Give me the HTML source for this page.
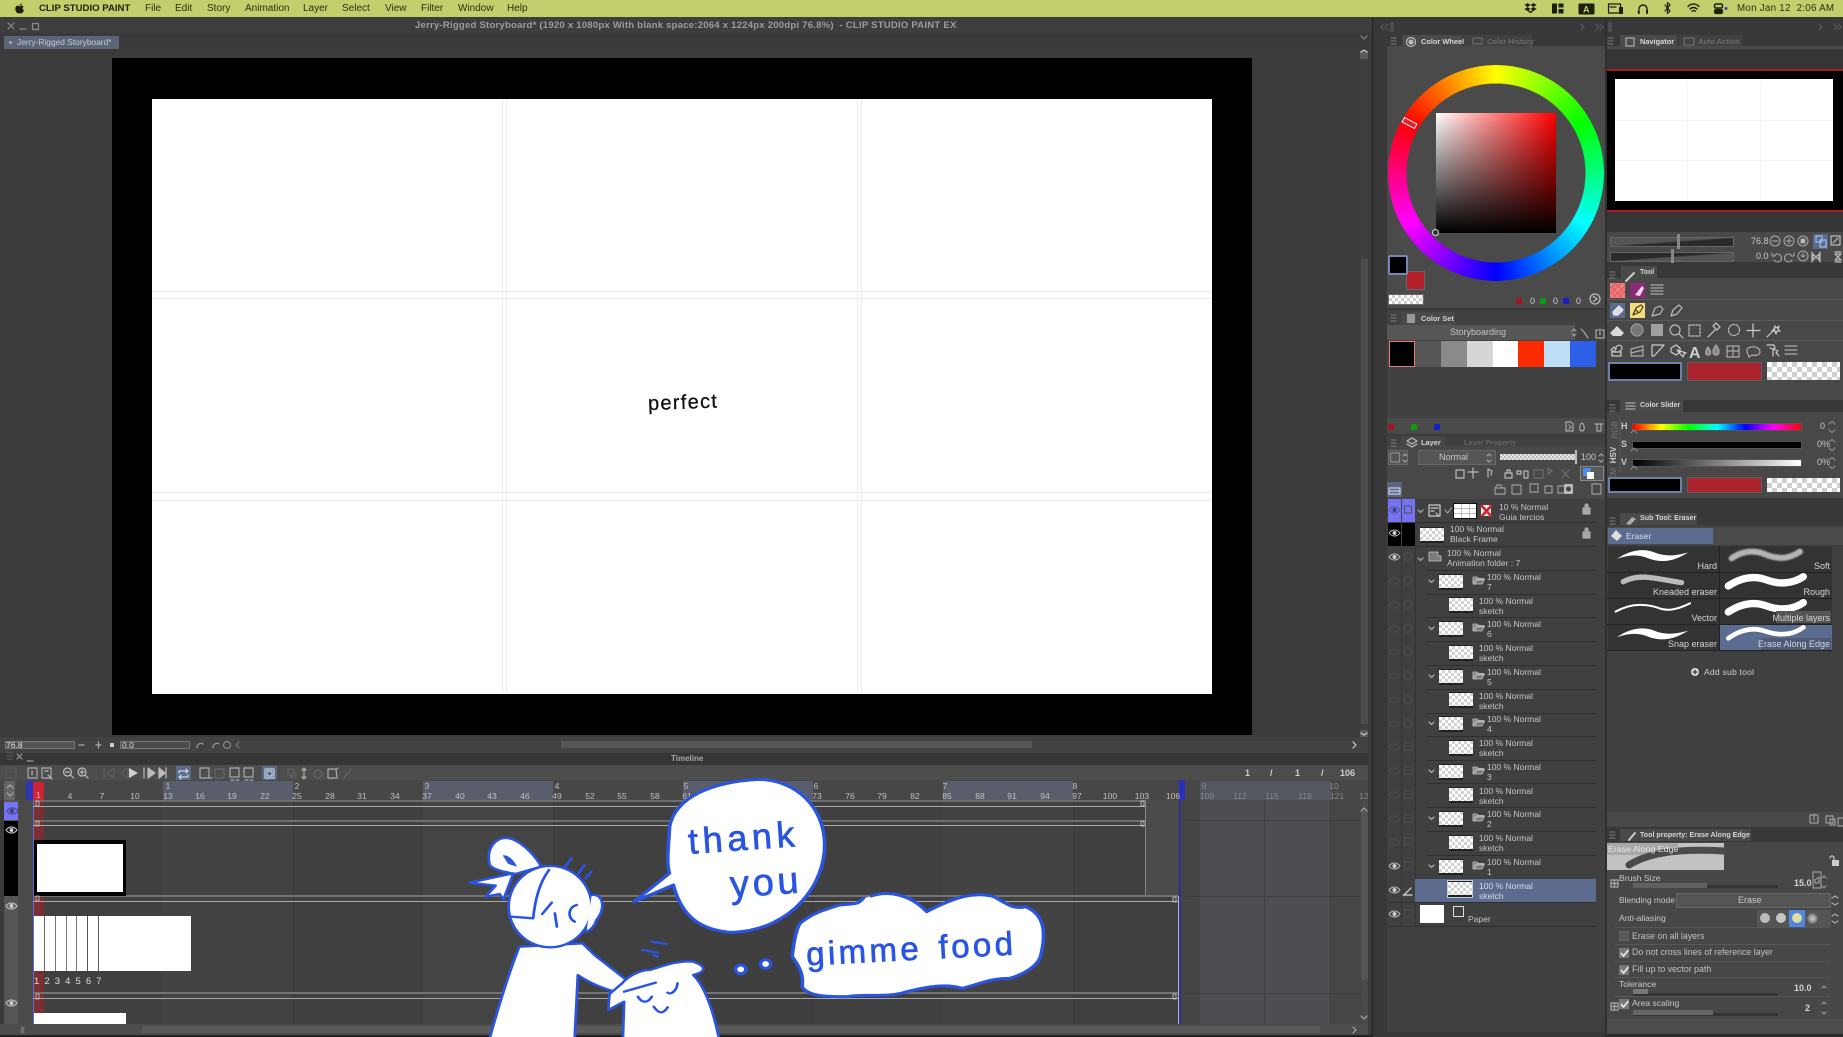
<!DOCTYPE html>
<html><head><meta charset="utf-8"><title>Clip Studio Paint</title>
<style>
html,body{margin:0;padding:0;background:#3b3b3b;width:1843px;height:1037px;overflow:hidden}
#p{position:relative;width:1843px;height:1037px;overflow:hidden;font-family:"Liberation Sans",sans-serif;color:#c8c8c8;filter:blur(.35px)}
#p div,#p span,#p svg{position:absolute}
.t{white-space:nowrap;line-height:1;font-size:9px}
.ck{background:repeating-conic-gradient(#cfcfcf 0 25%,#fff 0 50%) 0 0/8px 8px}
.m{top:3px;font-size:10px;color:#2c3010;line-height:11px;white-space:nowrap}
.tab{font-size:7.4px;line-height:1;white-space:nowrap;font-weight:bold}
.hl{background:#2f2f2f;height:1px;left:1416px;width:180px}
.a{font-size:8.5px;line-height:10px;white-space:pre;color:#c6c6c6}
.th{background:repeating-conic-gradient(#d2d2d2 0 25%,#fff 0 50%) 0 0/6px 6px;border-top:1px solid #222;border-bottom:2px solid #222;width:24px;height:13px}
.r i{position:absolute;top:0;width:20px;text-align:center;font-style:normal;font-size:8.5px;line-height:10px;color:#c0c0c0}
.d{background:#363636}
.lb{font-size:9px;line-height:1;white-space:nowrap;color:#d5d5d5;text-align:right}
</style></head><body><div id="p">

<!-- menu bar -->
<div style="left:0;top:0;width:1843px;height:17px;background:#c3ce6c"></div>
<span class="m" style="left:39px;font-weight:bold;font-size:9.6px;color:#1d2008">CLIP STUDIO PAINT</span>
<span class="m" style="left:145px">File</span><span class="m" style="left:175px">Edit</span><span class="m" style="left:207px">Story</span><span class="m" style="left:245px">Animation</span><span class="m" style="left:303px">Layer</span><span class="m" style="left:342px">Select</span><span class="m" style="left:385px">View</span><span class="m" style="left:421px">Filter</span><span class="m" style="left:458px">Window</span><span class="m" style="left:507px">Help</span>
<span class="m" style="left:1737px;font-size:9.8px;letter-spacing:.25px">Mon Jan 12&nbsp; 2:06 AM</span>

<!-- title area -->
<div style="left:0;top:17px;width:1373px;height:16px;background:#3e3e3e"></div>
<span class="t" style="left:415px;top:21px;font-size:9.6px;font-weight:bold;color:#9c9c9c;letter-spacing:.2px">Jerry-Rigged Storyboard* (1920 x 1080px With blank space:2064 x 1224px 200dpi 76.8%)&nbsp; - CLIP STUDIO PAINT EX</span>
<div style="left:0;top:33px;width:1373px;height:17px;background:#3a3a3a"></div>
<div style="left:4px;top:36px;width:115px;height:13px;background:#5c6478"></div>
<span class="t" style="left:17px;top:38px;font-size:8.4px;color:#c6cad4">Jerry-Rigged Storyboard*</span>
<div style="left:9px;top:41px;width:3px;height:3px;background:#aab;border-radius:2px"></div>

<!-- canvas -->
<div style="left:0;top:50px;width:1359px;height:687px;background:#3b3b3b"></div>
<div style="left:112px;top:58px;width:1140px;height:677px;background:#000"></div>
<div style="left:152px;top:99px;width:1060px;height:595px;background:#fff"></div>
<div style="left:152px;top:291px;width:1060px;height:1px;background:#ececec"></div>
<div style="left:152px;top:298px;width:1060px;height:1px;background:#ececec"></div>
<div style="left:152px;top:492px;width:1060px;height:1px;background:#ececec"></div>
<div style="left:152px;top:500px;width:1060px;height:1px;background:#ececec"></div>
<div style="left:502px;top:99px;width:1px;height:595px;background:#ececec"></div>
<div style="left:506px;top:99px;width:1px;height:595px;background:#ececec"></div>
<div style="left:857px;top:99px;width:1px;height:595px;background:#ececec"></div>
<div style="left:861px;top:99px;width:1px;height:595px;background:#ececec"></div>
<span class="t" style="left:648px;top:394px;font-size:20px;letter-spacing:1.3px;color:#111;-webkit-text-stroke:.3px #111;transform:rotate(-2deg);transform-origin:left">perfect</span>

<!-- canvas scrollbars -->
<div style="left:1360px;top:50px;width:8px;height:690px;background:#3f3f3f"></div>
<div style="left:1361px;top:259px;width:7px;height:465px;background:#4c4c4c"></div>
<div style="left:1360px;top:51px;width:8px;height:8px;background:#5a5a5a"></div>
<div style="left:1360px;top:730px;width:8px;height:8px;background:#5a5a5a"></div>
<div style="left:0;top:737px;width:1373px;height:16px;background:#424242"></div>
<div style="left:561px;top:741px;width:471px;height:7px;background:#565656"></div>
<div style="left:5px;top:741px;width:70px;height:8px;background:#555;border:1px solid #777;box-sizing:border-box"></div>
<div style="left:120px;top:741px;width:70px;height:8px;background:#4a4a4a;border:1px solid #777;box-sizing:border-box"></div>
<span class="t" style="left:6px;top:741px;font-size:8.5px;color:#ddd">76.8</span>
<span class="t" style="left:122px;top:741px;font-size:8.5px;color:#ddd">0.0</span>

<!-- timeline chrome -->
<div style="left:0;top:753px;width:1368px;height:12px;background:#363636"></div>
<span class="t" style="left:671px;top:755px;font-size:8px;font-weight:bold;color:#a5a5a5">Timeline</span>
<div style="left:0;top:765px;width:1368px;height:15px;background:#4d4d4d"></div>
<div style="left:176px;top:766px;width:15px;height:14px;background:#5b6a8a"></div>
<div style="left:262px;top:766px;width:15px;height:14px;background:#5b6a8a"></div>
<span class="t" style="left:1245px;top:769px;font-size:9px;font-weight:bold;color:#d0d0d0">1</span>
<span class="t" style="left:1270px;top:769px;font-size:9px;font-weight:bold;color:#d0d0d0">/</span>
<span class="t" style="left:1295px;top:769px;font-size:9px;font-weight:bold;color:#d0d0d0">1</span>
<span class="t" style="left:1321px;top:769px;font-size:9px;font-weight:bold;color:#d0d0d0">/</span>
<span class="t" style="left:1340px;top:769px;font-size:9px;font-weight:bold;color:#d0d0d0">106</span>

<!-- ruler -->
<div style="left:0;top:780px;width:1368px;height:20px;background:#474747"></div>
<div style="left:163px;top:781px;width:130px;height:19px;background:#5a5d6c"></div>
<div style="left:423px;top:781px;width:130px;height:19px;background:#5a5d6c"></div>
<div style="left:683px;top:781px;width:130px;height:19px;background:#5a5d6c"></div>
<div style="left:943px;top:781px;width:130px;height:19px;background:#5a5d6c"></div>
<div style="left:1200px;top:781px;width:131px;height:19px;background:#545660"></div>
<div style="left:26px;top:781px;width:7px;height:19px;background:#2a35b8"></div>
<div style="left:4px;top:781px;width:11px;height:19px;background:#646464"></div>

<!-- tracks -->
<div style="left:0;top:800px;width:1362px;height:224px;background:#404040"></div>
<div style="left:163px;top:800px;width:130px;height:224px;background:#434343"></div>
<div style="left:423px;top:800px;width:130px;height:224px;background:#444"></div>
<div style="left:683px;top:800px;width:130px;height:224px;background:#3f3f3f"></div>
<div style="left:943px;top:800px;width:130px;height:224px;background:#434343"></div>
<div style="left:1145px;top:800px;width:33px;height:96px;background:#4b4b4b"></div>
<div style="left:1178px;top:800px;width:22px;height:224px;background:#454545"></div>
<div style="left:1200px;top:800px;width:130px;height:224px;background:#4d4e53"></div>
<div style="left:1330px;top:800px;width:32px;height:224px;background:#464646"></div>
<div style="left:293px;top:800px;width:1px;height:224px;background:#383838"></div>
<div style="left:553px;top:800px;width:1px;height:224px;background:#393939"></div>
<div style="left:813px;top:800px;width:1px;height:224px;background:#393939"></div>
<div style="left:1073px;top:800px;width:1px;height:224px;background:#393939"></div>
<div style="left:1264px;top:800px;width:1px;height:224px;background:#3f3f3f"></div>
<div style="left:1330px;top:800px;width:1px;height:224px;background:#3f3f3f"></div>

<!-- left track columns -->
<div style="left:0;top:800px;width:4px;height:224px;background:#3b3b3b"></div>
<div style="left:4px;top:800px;width:14px;height:224px;background:#565656"></div>
<div style="left:18px;top:800px;width:15px;height:224px;background:#4a4a4a"></div>
<div style="left:4px;top:802px;width:14px;height:18px;background:#7473f2"></div>
<div style="left:4px;top:821px;width:14px;height:75px;background:#000"></div>

<!-- playhead -->
<div style="left:33px;top:800px;width:11px;height:224px;background:#7a2f33"></div>
<div style="left:33px;top:782px;width:11px;height:18px;background:#cf2336"></div>
<div style="left:33px;top:800px;width:1px;height:224px;background:#6468d8"></div>
<div style="left:1178px;top:896px;width:1px;height:128px;background:#b8b8c8"></div>
<div style="left:1145px;top:800px;width:1px;height:96px;background:#8a8a8a"></div>
<div style="left:1179px;top:780px;width:6px;height:20px;background:#2a2fc0"></div>
<div style="left:1179px;top:800px;width:2px;height:224px;background:#2d3190"></div>

<!-- row lines -->
<div style="left:33px;top:800px;width:1112px;height:2px;background:#6d6d6d"></div>
<div style="left:33px;top:806px;width:1112px;height:1px;background:#a8a8a8"></div>
<div style="left:33px;top:820px;width:1112px;height:2px;background:#6d6d6d"></div>
<div style="left:33px;top:825px;width:1112px;height:1px;background:#a8a8a8"></div>
<div style="left:33px;top:895px;width:1145px;height:2px;background:#737373"></div>
<div style="left:33px;top:901px;width:1145px;height:1px;background:#a8a8a8"></div>
<div style="left:33px;top:992px;width:1145px;height:2px;background:#737373"></div>
<div style="left:33px;top:998px;width:1145px;height:1px;background:#a8a8a8"></div>
<div style="left:1185px;top:820px;width:177px;height:1px;background:#3c3c3c"></div>
<div style="left:1185px;top:896px;width:177px;height:1px;background:#3c3c3c"></div>
<div style="left:1185px;top:993px;width:177px;height:1px;background:#3c3c3c"></div>

<!-- clips -->
<div style="left:34px;top:840px;width:92px;height:56px;background:#000"></div>
<div style="left:37px;top:844px;width:86px;height:48px;background:#fff"></div>
<div style="left:34px;top:916px;width:157px;height:55px;background:#fff"></div>
<div style="left:44px;top:916px;width:1px;height:55px;background:#666"></div>
<div style="left:55px;top:916px;width:1px;height:55px;background:#777"></div>
<div style="left:66px;top:916px;width:1px;height:55px;background:#777"></div>
<div style="left:76px;top:916px;width:1px;height:55px;background:#777"></div>
<div style="left:87px;top:916px;width:1px;height:55px;background:#555"></div>
<div style="left:98px;top:916px;width:1px;height:55px;background:#555"></div>
<div style="left:34px;top:1013px;width:92px;height:11px;background:#fff"></div>
<span class="t" style="left:34px;top:977px;font-size:9.5px;color:#ddd;letter-spacing:5.1px">1234567</span>

<!-- ruler labels -->
<div class="r" style="left:0;top:791px;width:1368px;height:10px;overflow:hidden">
<i style="left:60px">4</i><i style="left:92px">7</i><i style="left:125px">10</i><i style="left:158px">13</i><i style="left:190px">16</i><i style="left:222px">19</i><i style="left:255px">22</i><i style="left:287px">25</i><i style="left:320px">28</i><i style="left:352px">31</i><i style="left:385px">34</i><i style="left:417px">37</i><i style="left:450px">40</i><i style="left:482px">43</i><i style="left:515px">46</i><i style="left:547px">49</i><i style="left:580px">52</i><i style="left:612px">55</i><i style="left:645px">58</i><i style="left:677px">61</i><i style="left:807px">73</i><i style="left:840px">76</i><i style="left:872px">79</i><i style="left:905px">82</i><i style="left:937px">85</i><i style="left:970px">88</i><i style="left:1002px">91</i><i style="left:1035px">94</i><i style="left:1067px">97</i><i style="left:1100px">100</i><i style="left:1132px">103</i><i style="left:1163px">106</i><i style="left:1197px;color:#8c8c8c">109</i><i style="left:1230px;color:#8c8c8c">112</i><i style="left:1262px;color:#8c8c8c">115</i><i style="left:1295px;color:#8c8c8c">118</i><i style="left:1327px;color:#8c8c8c">121</i><i style="left:1354px;color:#8c8c8c">12</i>
</div>
<div class="r" style="left:0;top:781px;width:1368px;height:10px">
<i style="left:158px">1</i><i style="left:287px">2</i><i style="left:417px">3</i><i style="left:547px">4</i><i style="left:676px">5</i><i style="left:806px">6</i><i style="left:935px">7</i><i style="left:1065px">8</i><i style="left:1194px;color:#8c8c8c">9</i><i style="left:1324px;color:#8c8c8c">10</i>
</div>
<span class="t" style="left:36px;top:791px;font-size:8.5px;color:#f2b8b8">1</span>

<!-- timeline scrollbars -->
<div style="left:1362px;top:800px;width:8px;height:224px;background:#4a4a4a"></div>
<div style="left:1361px;top:810px;width:7px;height:170px;background:#555;border-radius:3px"></div>
<div style="left:0;top:1024px;width:1368px;height:11px;background:#4c4c4c"></div>
<div style="left:142px;top:1026px;width:1178px;height:7px;background:#5a5a5a"></div>
<div style="left:1368px;top:50px;width:5px;height:987px;background:#3a3a3a"></div>
<div style="left:1372px;top:17px;width:1px;height:1020px;background:#222"></div>
<div style="left:0;top:1035px;width:1373px;height:2px;background:#232323"></div>

<!-- right side -->
<div style="left:1373px;top:17px;width:470px;height:1020px;background:#383838"></div>
<div style="left:1387px;top:46px;width:218px;height:262px;background:#4a4a4a"></div>
<div style="left:1402px;top:35px;width:60px;height:11px;background:#4a4a4a"></div>
<div style="left:1464px;top:35px;width:68px;height:11px;background:#414141"></div>
<span class="tab" style="left:1421px;top:38px;color:#d8d8d8">Color Wheel</span>
<span class="tab" style="left:1487px;top:38px;color:#6b6b6b">Color History</span>
<!-- colour wheel -->
<div style="left:1388px;top:65px;width:216px;height:216px;border-radius:50%;background:conic-gradient(#ff0 0deg,#0f0 60deg,#0ff 120deg,#00f 180deg,#f0f 240deg,#f00 300deg,#ff0 360deg);-webkit-mask:radial-gradient(circle,transparent 89px,#000 90px);mask:radial-gradient(circle,transparent 89px,#000 90px)"></div>
<div style="left:1436px;top:113px;width:120px;height:120px;background:linear-gradient(to top,#000,rgba(0,0,0,0)),linear-gradient(to right,#fff,#f00)"></div>
<div style="left:1402px;top:120px;width:15px;height:6px;border:1px solid #fff;box-sizing:border-box;transform:rotate(28deg);background:#e81a2c"></div>
<div style="left:1432px;top:229px;width:7px;height:7px;border:1px solid #ddd;border-radius:50%;box-sizing:border-box;background:#333"></div>
<div style="left:1406px;top:271px;width:19px;height:19px;background:#b21f2b;border:1px solid #666;box-sizing:border-box"></div>
<div style="left:1388px;top:255px;width:20px;height:20px;background:#000;border:2px solid #7387b3;box-sizing:border-box;border-radius:2px"></div>
<div class="ck" style="left:1388px;top:294px;width:36px;height:11px;border:1px solid #666;box-sizing:border-box;background-size:6px 6px"></div>
<div style="left:1516px;top:298px;width:6px;height:6px;background:#a01520"></div>
<div style="left:1540px;top:298px;width:6px;height:6px;background:#0c9a18"></div>
<div style="left:1563px;top:298px;width:6px;height:6px;background:#1420c0"></div>
<span class="t" style="left:1530px;top:297px;font-size:9px">0</span><span class="t" style="left:1553px;top:297px;font-size:9px">0</span><span class="t" style="left:1576px;top:297px;font-size:9px">0</span>

<!-- colour set -->
<div style="left:1387px;top:310px;width:218px;height:125px;background:#414141"></div>
<div style="left:1401px;top:312px;width:54px;height:13px;background:#4a4a4a"></div>
<span class="tab" style="left:1421px;top:315px;color:#d4d4d4">Color Set</span>
<div style="left:1387px;top:325px;width:188px;height:15px;background:#565656"></div>
<span class="t" style="left:1450px;top:328px;font-size:9px;color:#c4c4c4">Storyboarding</span>
<div style="left:1389px;top:341px;width:26px;height:26px;background:#000;border:1px solid #e87a7a;box-sizing:border-box"></div>
<div style="left:1415px;top:341px;width:26px;height:26px;background:#555"></div>
<div style="left:1441px;top:341px;width:26px;height:26px;background:#8a8a8a"></div>
<div style="left:1467px;top:341px;width:26px;height:26px;background:#d6d6d6"></div>
<div style="left:1493px;top:341px;width:26px;height:26px;background:#fff"></div>
<div style="left:1518px;top:341px;width:26px;height:26px;background:#fb2d00"></div>
<div style="left:1544px;top:341px;width:26px;height:26px;background:#bfdff8"></div>
<div style="left:1570px;top:341px;width:26px;height:26px;background:#2d5fe8"></div>
<div style="left:1387px;top:418px;width:218px;height:15px;background:#4b4b4b"></div>
<div style="left:1388px;top:424px;width:6px;height:6px;background:#a01520"></div>
<div style="left:1411px;top:424px;width:6px;height:6px;background:#0c9a18"></div>
<div style="left:1434px;top:424px;width:6px;height:6px;background:#1420c0"></div>

<!-- layer palette -->
<div style="left:1387px;top:436px;width:218px;height:596px;background:#404040"></div>
<div style="left:1401px;top:436px;width:44px;height:10px;background:#474747"></div>
<div style="left:1447px;top:436px;width:70px;height:10px;background:#3f3f3f"></div>
<span class="tab" style="left:1421px;top:439px;color:#d4d4d4">Layer</span>
<span class="tab" style="left:1464px;top:439px;color:#666">Layer Property</span>
<div style="left:1387px;top:446px;width:218px;height:53px;background:#484848"></div>
<div style="left:1388px;top:450px;width:20px;height:15px;background:#555;border:1px solid #666;box-sizing:border-box"></div>
<div style="left:1418px;top:450px;width:78px;height:15px;background:#555;border:1px solid #666;box-sizing:border-box"></div>
<span class="t" style="left:1439px;top:453px;font-size:9px;color:#c8c8c8">Normal</span>
<div class="ck" style="left:1500px;top:454px;width:76px;height:6px;background-size:4px 4px;opacity:.85"></div>
<div style="left:1575px;top:450px;width:2px;height:14px;background:#bbb"></div>
<span class="t" style="left:1581px;top:453px;font-size:9px">100</span>
<div style="left:1580px;top:466px;width:24px;height:15px;background:#5a5a5a;border:1px solid #888;box-sizing:border-box"></div>
<div style="left:1583px;top:468px;width:8px;height:8px;background:#4a90e8"></div>
<div style="left:1587px;top:472px;width:7px;height:7px;background:#fff"></div>
<div style="left:1387px;top:482px;width:15px;height:15px;background:#596582"></div>

<!-- layer rows -->
<div style="left:1388px;top:499px;width:13px;height:23px;background:#7573f2"></div>
<div style="left:1402px;top:499px;width:13px;height:23px;background:#7573f2"></div>
<div style="left:1388px;top:523px;width:13px;height:23px;background:#000"></div>
<div style="left:1402px;top:523px;width:13px;height:23px;background:#000"></div>
<div style="left:1401px;top:546px;width:1px;height:380px;background:#343434"></div>
<div style="left:1415px;top:546px;width:1px;height:380px;background:#343434"></div>

<div class="hl" style="top:522px"></div><div class="hl" style="top:546px"></div><div class="hl" style="top:570px;left:1427px;width:169px"></div><div class="hl" style="top:594px;left:1427px;width:169px"></div><div class="hl" style="top:617px;left:1427px;width:169px"></div><div class="hl" style="top:641px;left:1427px;width:169px"></div><div class="hl" style="top:665px;left:1427px;width:169px"></div><div class="hl" style="top:689px;left:1427px;width:169px"></div><div class="hl" style="top:713px;left:1427px;width:169px"></div><div class="hl" style="top:736px;left:1427px;width:169px"></div><div class="hl" style="top:760px;left:1427px;width:169px"></div><div class="hl" style="top:783px;left:1427px;width:169px"></div><div class="hl" style="top:807px;left:1427px;width:169px"></div><div class="hl" style="top:831px;left:1427px;width:169px"></div><div class="hl" style="top:855px;left:1427px;width:169px"></div><div class="hl" style="top:902px;left:1387px;width:209px"></div><div class="hl" style="top:926px;left:1387px;width:209px"></div>

<div style="left:1453px;top:503px;width:24px;height:16px;background:#fff;border:1px solid #111;box-sizing:border-box"></div>
<div style="left:1454px;top:508px;width:22px;height:1px;background:#bbb"></div>
<div style="left:1454px;top:513px;width:22px;height:1px;background:#bbb"></div>
<div style="left:1461px;top:504px;width:1px;height:14px;background:#bbb"></div>
<div style="left:1469px;top:504px;width:1px;height:14px;background:#bbb"></div>
<span class="a" style="left:1499px;top:502px">10 % Normal
Guia tercios</span>

<div class="th" style="left:1420px;top:527px"></div>
<span class="a" style="left:1450px;top:524px">100 % Normal
Black Frame</span>
<span class="a" style="left:1447px;top:548px">100 % Normal
Animation folder : 7</span>

<div class="th" style="left:1439px;top:574px"></div><span class="a" style="left:1487px;top:572px">100 % Normal
7</span>
<div class="th" style="left:1449px;top:597px"></div><span class="a" style="left:1479px;top:596px">100 % Normal
sketch</span>
<div class="th" style="left:1439px;top:621px"></div><span class="a" style="left:1487px;top:619px">100 % Normal
6</span>
<div class="th" style="left:1449px;top:645px"></div><span class="a" style="left:1479px;top:643px">100 % Normal
sketch</span>
<div class="th" style="left:1439px;top:669px"></div><span class="a" style="left:1487px;top:667px">100 % Normal
5</span>
<div class="th" style="left:1449px;top:692px"></div><span class="a" style="left:1479px;top:691px">100 % Normal
sketch</span>
<div class="th" style="left:1439px;top:716px"></div><span class="a" style="left:1487px;top:714px">100 % Normal
4</span>
<div class="th" style="left:1449px;top:740px"></div><span class="a" style="left:1479px;top:738px">100 % Normal
sketch</span>
<div class="th" style="left:1439px;top:764px"></div><span class="a" style="left:1487px;top:762px">100 % Normal
3</span>
<div class="th" style="left:1449px;top:787px"></div><span class="a" style="left:1479px;top:786px">100 % Normal
sketch</span>
<div class="th" style="left:1439px;top:811px"></div><span class="a" style="left:1487px;top:809px">100 % Normal
2</span>
<div class="th" style="left:1449px;top:835px"></div><span class="a" style="left:1479px;top:833px">100 % Normal
sketch</span>
<div class="th" style="left:1439px;top:859px"></div><span class="a" style="left:1487px;top:857px">100 % Normal
1</span>
<div style="left:1415px;top:879px;width:181px;height:23px;background:#5c6b8e"></div>
<div class="th" style="left:1448px;top:881px;outline:1px solid #c4cee4"></div><span class="a" style="left:1479px;top:881px;color:#d8deea">100 % Normal
sketch</span>
<div style="left:1420px;top:905px;width:24px;height:18px;background:#fff"></div>
<span class="a" style="left:1468px;top:914px">Paper</span>
<div style="left:1453px;top:906px;width:11px;height:11px;border:1px solid #ddd;box-sizing:border-box"></div>

<!-- navigator -->
<div style="left:1605px;top:17px;width:2px;height:1020px;background:#2f2f2f"></div>
<div style="left:1607px;top:46px;width:236px;height:3px;background:#4a4a4a"></div>
<div style="left:1620px;top:35px;width:57px;height:11px;background:#4a4a4a"></div>
<div style="left:1679px;top:35px;width:64px;height:11px;background:#414141"></div>
<span class="tab" style="left:1640px;top:38px;color:#d8d8d8">Navigator</span>
<span class="tab" style="left:1698px;top:38px;color:#6b6b6b">Auto Action</span>
<div style="left:1607px;top:49px;width:236px;height:183px;background:#353535"></div>
<div style="left:1607px;top:70px;width:236px;height:141px;background:#000"></div>
<div style="left:1607px;top:69px;width:236px;height:2px;background:#a81a22"></div>
<div style="left:1607px;top:210px;width:236px;height:2px;background:#a81a22"></div>
<div style="left:1615px;top:79px;width:218px;height:122px;background:#fff"></div>
<div style="left:1687px;top:79px;width:1px;height:122px;background:#f4f4f4"></div>
<div style="left:1760px;top:79px;width:1px;height:122px;background:#f4f4f4"></div>
<div style="left:1615px;top:120px;width:218px;height:1px;background:#f4f4f4"></div>
<div style="left:1615px;top:160px;width:218px;height:1px;background:#f4f4f4"></div>
<div style="left:1607px;top:232px;width:236px;height:30px;background:#494949"></div>
<div style="left:1610px;top:237px;width:124px;height:10px;background:linear-gradient(176deg,#555 45%,#2a2a2a 55%);border:1px solid #666;box-sizing:border-box"></div>
<div style="left:1610px;top:252px;width:124px;height:10px;background:linear-gradient(176deg,#2a2a2a 45%,#555 55%);border:1px solid #666;box-sizing:border-box"></div>
<div style="left:1677px;top:234px;width:3px;height:15px;background:#888"></div>
<div style="left:1671px;top:249px;width:3px;height:14px;background:#888"></div>
<span class="t" style="left:1751px;top:237px;font-size:9px">76.8</span>
<span class="t" style="left:1756px;top:252px;font-size:9px">0.0</span>
<div style="left:1813px;top:234px;width:15px;height:15px;background:#5b6a8a"></div>

<!-- tool palette -->
<div style="left:1607px;top:278px;width:236px;height:122px;background:#484848"></div>
<div style="left:1621px;top:266px;width:36px;height:12px;background:#4a4a4a"></div>
<span class="tab" style="left:1640px;top:269px;color:#d4d4d4;font-size:7px">Tool</span>
<div style="left:1607px;top:299px;width:236px;height:1px;background:#5a5a5a"></div>
<div style="left:1607px;top:320px;width:236px;height:1px;background:#5a5a5a"></div>
<div style="left:1607px;top:340px;width:236px;height:1px;background:#5a5a5a"></div>
<div style="left:1610px;top:283px;width:15px;height:15px;background:#ee7e80"></div>
<div style="left:1630px;top:283px;width:15px;height:15px;background:#8c2a78"></div>
<div style="left:1610px;top:303px;width:15px;height:15px;background:#5c6b90"></div>
<div style="left:1630px;top:303px;width:15px;height:15px;background:#f3dd7c"></div>
<div style="left:1608px;top:362px;width:74px;height:19px;background:#000;border:2px solid #6c80aa;box-sizing:border-box"></div>
<div style="left:1687px;top:362px;width:75px;height:19px;background:#ac222d;border:1px solid #5c5c5c;box-sizing:border-box"></div>
<div class="ck" style="left:1767px;top:362px;width:73px;height:18px;background-size:10px 10px"></div>
<span class="t" style="left:1689px;top:346px;font-size:16px;color:#cfcfcf;font-weight:bold">A</span>

<!-- colour slider -->
<div style="left:1607px;top:412px;width:236px;height:86px;background:#484848"></div>
<div style="left:1620px;top:400px;width:63px;height:12px;background:#4a4a4a"></div>
<span class="tab" style="left:1640px;top:402px;color:#d4d4d4;font-size:7.1px">Color Slider</span>
<div style="left:1633px;top:424px;width:168px;height:6px;background:linear-gradient(to right,#f00,#ff0,#0f0,#0ff,#00f,#f0f,#f00);outline:1px solid #555"></div>
<div style="left:1633px;top:442px;width:168px;height:6px;background:#000;outline:1px solid #555"></div>
<div style="left:1633px;top:460px;width:168px;height:6px;background:linear-gradient(to right,#000,#fff);outline:1px solid #555"></div>
<span class="t" style="left:1621px;top:422px;font-size:9px;font-weight:bold">H</span>
<span class="t" style="left:1621px;top:440px;font-size:9px;font-weight:bold">S</span>
<span class="t" style="left:1621px;top:458px;font-size:9px;font-weight:bold">V</span>
<span class="t" style="left:1820px;top:422px;font-size:9px">0</span>
<span class="t" style="left:1817px;top:440px;font-size:9px">0%</span>
<span class="t" style="left:1817px;top:458px;font-size:9px">0%</span>
<span class="t" style="left:1606px;top:451px;font-size:8px;color:#cfcfcf;transform:rotate(-90deg);font-weight:bold">HSV</span>
<span class="t" style="left:1607px;top:426px;font-size:8px;color:#777;transform:rotate(-90deg)">RGB</span>
<span class="t" style="left:1608px;top:470px;font-size:8px;color:#777;transform:rotate(-90deg)">CM</span>
<div style="left:1608px;top:477px;width:74px;height:16px;background:#000;border:2px solid #6c80aa;box-sizing:border-box"></div>
<div style="left:1687px;top:477px;width:75px;height:16px;background:#ac222d;border:1px solid #5c5c5c;box-sizing:border-box"></div>
<div class="ck" style="left:1767px;top:478px;width:73px;height:14px;background-size:10px 10px"></div>

<!-- sub tool -->
<div style="left:1607px;top:525px;width:236px;height:290px;background:#404040"></div>
<div style="left:1620px;top:513px;width:77px;height:12px;background:#4a4a4a"></div>
<span class="tab" style="left:1640px;top:515px;color:#d4d4d4;font-size:7.1px">Sub Tool: Eraser</span>
<div style="left:1607px;top:527px;width:236px;height:18px;background:#4a4a4a"></div>
<div style="left:1608px;top:528px;width:105px;height:16px;background:#5c6b90"></div>
<span class="t" style="left:1626px;top:532px;font-size:8.6px;color:#d8deea">Eraser</span>
<div style="left:1608px;top:546px;width:224px;height:105px;background:#333"></div>
<div style="left:1720px;top:625px;width:112px;height:25px;background:#5c6b90"></div>
<div style="left:1607px;top:572px;width:225px;height:1px;background:#222"></div>
<div style="left:1607px;top:598px;width:225px;height:1px;background:#222"></div>
<div style="left:1607px;top:624px;width:225px;height:1px;background:#222"></div>
<div style="left:1607px;top:650px;width:225px;height:1px;background:#222"></div>
<div style="left:1719px;top:546px;width:1px;height:105px;background:#222"></div>

<!-- tool property -->
<div style="left:1607px;top:812px;width:236px;height:15px;background:#494949"></div>
<div style="left:1607px;top:827px;width:236px;height:14px;background:#383838"></div>
<div style="left:1620px;top:829px;width:131px;height:12px;background:#4a4a4a"></div>
<span class="tab" style="left:1640px;top:832px;color:#d4d4d4;font-size:7.1px">Tool property: Erase Along Edge</span>
<div style="left:1607px;top:842px;width:236px;height:195px;background:#474747"></div>
<div style="left:1607px;top:843px;width:117px;height:27px;background:#c2c2c2"></div>
<div style="left:1607px;top:843px;width:71px;height:12px;background:#a8a8a8"></div>

<!-- full page icon / brush overlay -->
<svg style="left:0;top:0" width="1843" height="1037" viewBox="0 0 1843 1037" fill="none" stroke="#bdbdbd" stroke-width="1.2" stroke-linecap="round" stroke-linejoin="round">
<!-- apple -->
<path d="M19.8 6.5C18.5 5.6 17.2 5.3 16.2 6.3 14.8 7.7 15 11 17.2 13 18 13.7 18.8 13.4 19.7 13.1 20.5 13.4 21.4 13.7 22.2 13 23 12.2 23.8 11 24 10.3 22.5 9.6 22.2 7.6 23.6 6.7 22.6 5.3 20.9 5.6 19.8 6.5ZM19.7 5.8C19.6 4.7 20.5 3.7 21.8 3.4 21.9 4.6 20.9 5.7 19.7 5.8Z" fill="#1d2008" stroke="none"/>
<!-- status icons -->
<g fill="#1d2008" stroke="none">
<path d="M1527.5 3l3 2-3 2-3-2zM1533.5 3l3 2-3 2-3-2zM1527.5 7l3 2-3 2-3-2zM1533.5 7l3 2-3 2-3-2zM1530.5 11.5l2.8-1.6v1.3l-2.8 2-2.8-2v-1.3z"/>
<rect x="1552" y="3.5" width="5" height="10"/><rect x="1558.5" y="3.5" width="5" height="4"/><rect x="1558.5" y="9" width="5" height="4.5"/>
<rect x="1578.5" y="3.5" width="16" height="11" rx="1.2"/>
<path d="M1640 9a4 4 0 0 1 8 0v3" transform="translate(-1)" fill="none" stroke="#1d2008" stroke-width="1.5"/>
<rect x="1637.8" y="10" width="2" height="4" rx="1"/><rect x="1646" y="10" width="2" height="4" rx="1"/>
<rect x="1622" y="7" width="4" height="7" rx=".5" transform="translate(-3)"/>
</g>
<rect x="1608.5" y="4" width="12" height="9" stroke="#1d2008"/><path d="M1610 7h6" stroke="#1d2008"/>
<path d="M1665 5l5 6-2.5 2.5v-11L1670 5l-5 6" stroke="#1d2008"/>
<path d="M1688 6.5c3-3.2 8-3.2 11 0M1690 9c2-2 5-2 7 0M1692 11.3c1-1 2.500-1 3.500 0" stroke="#1d2008" stroke-width="1.4"/>
<rect x="1714.500" y="4" width="8" height="4" rx="1.500" stroke="#1d2008" stroke-width="1.500"/><rect x="1714.500" y="9.500" width="8" height="4" rx="1.500" fill="#1d2008" stroke="#1d2008"/><circle cx="1726" cy="8.500" r="1.500" fill="#3a34c0" stroke="none"/>
<text x="1583" y="12.500" font-size="9" font-weight="bold" fill="#c3ce6c" stroke="none" font-family="Liberation Sans">A</text>
<!-- window controls -->
<path d="M8 23l6 6M14 23l-6 6M20 29h6M32.500 23.500h6v6h-6z" stroke="#8a8a8a"/>
<path d="M1361 36l3 3 3-3" stroke="#888"/>
<path d="M1384 24l-3 3 3 3M1388 24l-3 3 3 3M1391 23v8h2v-8zM1581 24l3 3-3 3M1596 24l3 3-3 3M1600 24l3 3-3 3M1609 23v8h2v-8zM1819 24l3 3-3 3M1834 24l3 3-3 3M1838 24l3 3-3 3" stroke="#5a5a5a"/>
<path d="M1391 38h5M1391 41h5M1391 44h5M1608 38h5M1608 41h5M1608 44h5M1391 315h5M1391 318h5M1391 321h5M1391 440h5M1391 443h5M1391 446h5M1610 272h5M1610 275h5M1610 278h5M1610 405h5M1610 408h5M1610 411h5M1610 518h5M1610 521h5M1610 524h5M1610 832h5M1610 835h5M1610 838h5" stroke="#6f6f6f"/>
<!-- tab icons -->
<circle cx="1411" cy="42" r="4.500"/><circle cx="1411" cy="42" r="2" fill="#bdbdbd"/>
<rect x="1473" y="38" width="9" height="6" stroke="#6a6a6a"/>
<rect x="1626" y="38" width="8" height="8" stroke="#aaa"/>
<rect x="1684" y="38" width="10" height="7" stroke="#6a6a6a"/>
<rect x="1407" y="314" width="8" height="9" fill="#999" stroke="none"/>
<path d="M1407 441l5-3 5 3-5 3zM1407 444l5 3 5-3"/>
<path d="M1626 281l8-8" stroke-width="2" stroke="#ccc"/>
<path d="M1626 403h9M1626 406h9M1626 409h9" stroke="#aaa"/>
<path d="M1626 524l6-7 4 2-6 6z" fill="#aaa" stroke="none"/>
<path d="M1629 840l6-7" stroke-width="2" stroke="#ccc"/>
<!-- colour wheel play -->
<circle cx="1595" cy="299" r="5"/><path d="M1593.500 296.500l3.500 2.500-3.500 2.500"/>
<!-- color set tools -->
<path d="M1574 330v-1m0 6v1M1572 331l2-2 2 2M1572 334l2 2 2-2" stroke="#9c9c9c"/>
<path d="M1581 329l3 3 4 6M1598 330h-2v8h8v-8h-2M1600 329v6" stroke="#aaa"/>
<path d="M1566 422h5l2 2v7h-7zM1569 425l2 2-2 2M1582 431c-3 0-3-6 0-8 3 2 3 8 0 8zM1595 424h8M1597 424v7h4v-7" stroke="#aaa"/>
<!-- layer toolbar -->
<path d="M1403 456l2-2 2 2M1403 460l2 2 2-2M1487 456l2-2 2 2M1487 460l2 2 2-2M1599 456l2-2 2 2M1599 460l2 2 2-2" stroke="#aaa" stroke-width="1"/>
<rect x="1390.500" y="453" width="9" height="9" stroke="#8a8a8a"/>
<g transform="translate(0 -2)">
<path d="M1456 472h8v8h-8zM1473 470v10M1468 474h10M1488 471v8M1488 471l4 2-1 4M1505 475h7v5h-7zM1507 475v-3h3v3M1517 473h4v3h-4zM1524 473h4v7h-4z" stroke="#bbb"/>
<path d="M1534 472h9v8h-9zM1548 470l4 3-4 3zM1562 472l7 8M1562 480l7-8" stroke="#6e6e6e"/>
</g>
<path d="M1592 484h9v10h-9zM1530 484h8v8h-8zM1512 485h9v9h-9zM1495 488h10v6h-10zM1495 488l2-3h4l1 3M1545 486h7v7h-7zM1558 486h7v7h-7z" stroke="#9a9a9a"/>
<rect x="1564" y="484" width="9" height="10" fill="#bbb" stroke="none" rx="1"/><circle cx="1568.500" cy="489" r="2.500" fill="#444" stroke="none"/>
<path d="M1389 488h11v6h-11zM1389 491h11" stroke="#c8d0e0"/>
<!-- layer eyes -->
<g stroke="#bdbdbd" stroke-width="1">
<path d="M1389 510c3-4 8-4 11 0-3 4-8 4-11 0z" stroke="#55549a"/><circle cx="1394.500" cy="510" r="2" fill="#3c3b80" stroke="none"/>
<path d="M1389 533c3-4 8-4 11 0-3 4-8 4-11 0z"/><circle cx="1394.500" cy="533" r="2" fill="#ccc" stroke="none"/>
<path d="M1389 557c3-4 8-4 11 0-3 4-8 4-11 0z"/><circle cx="1394.500" cy="557" r="2" fill="#ccc" stroke="none"/>
<path d="M1389 866c3-4 8-4 11 0-3 4-8 4-11 0z"/><circle cx="1394.500" cy="866" r="2" fill="#ccc" stroke="none"/>
<path d="M1389 890c3-4 8-4 11 0-3 4-8 4-11 0z"/><circle cx="1394.500" cy="890" r="2" fill="#ccc" stroke="none"/>
<path d="M1389 914c3-4 8-4 11 0-3 4-8 4-11 0z"/><circle cx="1394.500" cy="914" r="2" fill="#ccc" stroke="none"/>
</g>
<g stroke="#4e4e4e" stroke-width="1">
<path d="M1389 581c3-4 8-4 11 0-3 4-8 4-11 0zM1389 605c3-4 8-4 11 0-3 4-8 4-11 0zM1389 629c3-4 8-4 11 0-3 4-8 4-11 0zM1389 652c3-4 8-4 11 0-3 4-8 4-11 0zM1389 676c3-4 8-4 11 0-3 4-8 4-11 0zM1389 700c3-4 8-4 11 0-3 4-8 4-11 0zM1389 724c3-4 8-4 11 0-3 4-8 4-11 0zM1389 747c3-4 8-4 11 0-3 4-8 4-11 0zM1389 771c3-4 8-4 11 0-3 4-8 4-11 0zM1389 795c3-4 8-4 11 0-3 4-8 4-11 0zM1389 819c3-4 8-4 11 0-3 4-8 4-11 0zM1389 842c3-4 8-4 11 0-3 4-8 4-11 0z"/>
<path d="M1404.500 506h7v7h-7zM1404.500 553h7v7h-7zM1404.500 577h7v7h-7zM1404.500 601h7v7h-7zM1404.500 625h7v7h-7zM1404.500 648h7v7h-7zM1404.500 672h7v7h-7zM1404.500 696h7v7h-7zM1404.500 720h7v7h-7zM1404.500 743h7v7h-7zM1404.500 767h7v7h-7zM1404.500 791h7v7h-7zM1404.500 815h7v7h-7zM1404.500 838h7v7h-7zM1404.500 862h7v7h-7zM1404.500 910h7v7h-7z"/>
</g>
<path d="M1404 895l7-7M1403 895h9" stroke="#ddd"/>
<!-- chevrons -->
<path d="M1418 510l2.500 2.500 2.500-2.500M1418 558l2.500 2.500 2.500-2.500M1429 580l2.500 2.500 2.500-2.500M1429 627l2.500 2.500 2.500-2.500M1429 675l2.500 2.500 2.500-2.500M1429 722l2.500 2.500 2.500-2.500M1429 770l2.500 2.500 2.500-2.500M1429 817l2.500 2.500 2.500-2.500M1429 865l2.500 2.500 2.500-2.500" stroke="#b5b5b5"/>
<!-- folder icons -->
<g stroke="#c5c5c5" fill="#7a7a7a" stroke-width=".8">
<path d="M1473 584v-7h4l1.500 1.500h5v1.500h-7l-1.500 4zM1473 584l2.500-5h9l-2.500 5z"/><path d="M1473 631v-7h4l1.500 1.500h5v1.500h-7l-1.500 4zM1473 631l2.500-5h9l-2.500 5z"/><path d="M1473 679v-7h4l1.500 1.500h5v1.500h-7l-1.500 4zM1473 679l2.500-5h9l-2.500 5z"/><path d="M1473 726v-7h4l1.500 1.500h5v1.500h-7l-1.500 4zM1473 726l2.500-5h9l-2.500 5z"/><path d="M1473 774v-7h4l1.500 1.500h5v1.500h-7l-1.500 4zM1473 774l2.500-5h9l-2.500 5z"/><path d="M1473 821v-7h4l1.500 1.500h5v1.500h-7l-1.500 4zM1473 821l2.500-5h9l-2.500 5z"/><path d="M1473 869v-7h4l1.500 1.500h5v1.500h-7l-1.500 4zM1473 869l2.500-5h9l-2.500 5z"/>
<path d="M1429 561v-9h9v4h3v5z"/>
</g>
<rect x="1429" y="505" width="11" height="11" stroke="#ccc"/><path d="M1431 508h7M1431 511h3M1436 513l3 3" stroke="#ccc"/>
<path d="M1445 510l2.500 3 4-5" stroke="#9a9a9a"/>
<path d="M1481 505h10v11h-10z" fill="#e9e9e9" stroke="none"/><path d="M1482 506l9 10M1491 506l-9 10" stroke="#d0222c" stroke-width="2.500"/>
<path d="M1583 508h7v6h-7zM1585 508v-2.500a1.500 1.500 0 0 1 3 0v2.500M1583 532h7v6h-7zM1585 532v-2.500a1.500 1.500 0 0 1 3 0v2.500" fill="#a8a8a8" stroke="#a8a8a8"/>
<!-- navigator controls -->
<g stroke-width="1" stroke="#aaa">
<circle cx="1775" cy="241" r="5"/><path d="M1772 241h6"/><circle cx="1789" cy="241" r="5"/><path d="M1786 241h6M1789 238v6"/><circle cx="1803" cy="241" r="5"/><rect x="1801" y="239" width="4" height="4" fill="#bdbdbd"/>
<path d="M1774 256a4 4 0 1 1 0 4M1772 253v3h3M1792 256a4 4 0 1 0 0 4M1794 253v3h-3" /><circle cx="1803" cy="256" r="5"/><path d="M1803 253v4l-2-1.500M1803 257l2-1.500"/>
</g>
<path d="M1816 236h6v6h-6zM1820 240h6v7h-6z" stroke="#9cc0f0"/><path d="M1831 236h9v9h-9zM1833 243l5-5" stroke="#bbb"/>
<path d="M1812 252v10M1820 252v10M1816 257l-3-3v6zM1816 257l3-3v6z" stroke="#bbb"/><path d="M1835 252h6M1835 262h6M1838 257l-3-3h6zM1838 257l-3 3h6z" stroke="#bbb"/>
<!-- tool row 1-2 -->
<g stroke="#e04d52" stroke-width=".8"><path d="M1611 288l5-5M1611 293l10-10M1614 297l11-11M1619 297l6-6M1611 287l11 10M1616 284l9 9M1611 292l5 5"/></g>
<path d="M1635 295l7-9 2 2-4 8z" fill="#eed8ee" stroke="none"/>
<path d="M1651 285h12M1651 288h12M1651 291h12M1651 294h12" stroke="#a8a8a8"/>
<path d="M1613 312l6-6 4 4-5 5h-4z" fill="#ddd" stroke="#eee"/>
<path d="M1633 315l3-7 5-3 2 2-3 5zM1636 310l2 2" stroke="#44360a" fill="none"/>
<path d="M1652 316l3-8 5-2 3 3-3 5zM1671 316l2-6 6-5 3 3-5 6z" stroke="#bbb"/>
<!-- tool row 3 -->
<path d="M1610 333l7-7 7 7-3 3h-8z" fill="#d8d8d8" stroke="none"/>
<circle cx="1637" cy="330" r="6" fill="#777" stroke="#999"/>
<rect x="1651" y="324" width="12" height="12" fill="#a0a0a0" stroke="none"/>
<circle cx="1675" cy="330" r="5"/><path d="M1679 334l4 4"/>
<rect x="1689" y="325" width="11" height="11" stroke-dasharray="2 1.500"/>
<path d="M1708 337l8-8M1713 326l4 4 3-3-4-4z" stroke="#ccc"/>
<circle cx="1734" cy="330" r="5.500" stroke-dasharray="2 1.500"/>
<path d="M1753 324v13M1747 330.500h13" stroke="#ccc"/>
<path d="M1767 337l8-8M1775 326l2 2 2-2-1 3 2 2-3 0-1 3-1-3-3 0 2-2z" stroke="#ccc"/>
<!-- tool row 4 -->
<path d="M1611 350l3-3 2 2-3 3zM1612 352h9v4h-9zM1616 348a3 3 0 1 1 4 3" stroke="#ccc"/>
<path d="M1631 349l12-3v4l-12 3zM1631 349v7h12v-6" stroke="#aaa"/>
<path d="M1652 345h12l-10 11h-2z" stroke="#ccc"/>
<path d="M1671 348l5-3 4 3v4l-4 3-5-3zM1677 350l6 7 1-3 2-1z" stroke="#ccc"/>
<path d="M1708 355c-3 0-3-4 0-8 3 4 4 8 0 8zM1716 355c-4 0-4-5 0-10 4 5 4 10 0 10z" fill="#888" stroke="#aaa"/>
<path d="M1727 346h12v11h-12zM1733 346v11M1727 351h12" stroke="#aaa"/>
<path d="M1747 352c-2-7 13-7 13 0 0 3-5 4-8 3l-3 2z" stroke="#aaa"/>
<path d="M1767 345h7l1 3-2 1v7M1770 348l8 3-2 2 3 3" stroke="#ccc"/>
<path d="M1785 346h12M1785 350h12M1785 354h12" stroke="#aaa"/>
<!-- slider arrows -->
<path d="M1631 433l3-3 3 3M1631 451l3-3 3 3M1631 469l3-3 3 3M1829 424l3-2.500 3 2.500M1829 430l3 2.500 3-2.500M1829 442l3-2.500 3 2.500M1829 448l3 2.500 3-2.500M1829 460l3-2.500 3 2.500M1829 466l3 2.500 3-2.500" stroke="#888"/>
<path d="M1620 416v56" stroke="#555"/>
<!-- sub tool -->
<path d="M1611 536l5-6 6 6-5 5z" fill="#ddd" stroke="none"/>
<circle cx="1695" cy="672" r="4" fill="#ddd" stroke="none"/><path d="M1693 672h4M1695 670v4" stroke="#333"/>
<g transform="translate(1600 510) scale(.3333)">
<path d="M50 147C90 120 130 113 165 128 195 140 225 138 265 127 225 152 190 160 150 147 120 134 90 132 50 147Z" fill="#fff" stroke="none"/>
<path d="M395 145C430 120 470 120 500 135 540 150 570 145 600 125" stroke="#ccc" stroke-width="18" style="filter:blur(2px)" opacity=".85"/>
<path d="M70 215C120 190 160 205 245 218" stroke="#ddd" stroke-width="16" stroke-dasharray="3 2" style="filter:blur(1px)" opacity=".8"/>
<path d="M385 228C420 205 460 195 500 210 540 225 580 220 610 200" stroke="#fff" stroke-width="22"/>
<path d="M47 305C90 280 130 280 170 292 200 305 230 300 270 280" stroke="#fff" stroke-width="6"/>
<path d="M385 306C420 283 460 273 500 288 540 303 580 298 610 278" stroke="#fff" stroke-width="22"/>
<path d="M50 382C90 355 130 348 165 363 195 375 225 373 265 362 225 387 190 395 150 382 120 369 90 367 50 382Z" fill="#fff" stroke="none"/>
<path d="M385 385C420 360 460 350 500 365 540 378 580 375 610 352" stroke="#fff" stroke-width="14"/>
</g>
<!-- sub tool buttons -->
<path d="M1810 815h8v8h-8zM1814 814v6M1826 816h7v7h-7zM1830 819h5v6h-5zM1838 818h6v8h-6z" stroke="#9a9a9a"/>
<!-- property preview -->
<path d="M1629 865C1645 855 1670 848 1724 851" stroke="#4b4b4b" stroke-width="7"/>
<path d="M1832 860h7v6h-7z" fill="#ccc" stroke="none"/><path d="M1830 858a2 2 0 0 1 4 0v2" stroke="#ccc"/>
<path d="M1611 880h7v7h-7zM1614.500 881v5M1612 883.500h5" stroke="#aaa"/>
<path d="M1611 1003h7v7h-7zM1614.500 1004v5M1612 1006.500h5" stroke="#aaa"/>
<path d="M1822 878l2-2 2 2M1822 886l2 2 2-2M1822 988l2-2 2 2M1822 1004l2-2 2 2M1822 1012l2 2 2-2" stroke="#999"/>
<path d="M1813 872h8v16h-8zM1815 880l4-3v6h-4z" stroke="#999"/>
<path d="M1832 898l3-2 3 2M1832 903l3 2 3-2M1832 916l3-2 3 2M1832 921l3 2 3-2" stroke="#aaa"/>
<circle cx="1821" cy="1026" r="5" stroke="#aaa"/><path d="M1821 1023v4l-2-1.500M1821 1027l2-1.500M1835 1021l3 3 2 4" stroke="#aaa"/>
<!-- timeline toolbar -->
<path d="M7 753h6M7 756h6M7 759h6" stroke="#555"/><path d="M17 754l5 5M22 754l-5 5M27 761h6" stroke="#9a9a9a"/>
<rect x="6" y="768" width="10" height="10" stroke="#5a5a5a"/><rect x="28" y="768" width="9" height="10" stroke="#aaa"/><path d="M32 771v4"/><rect x="42" y="768" width="9" height="10" stroke="#aaa"/><path d="M45 771h3M48 775l4 4"/>
<circle cx="67.500" cy="772" r="4"/><path d="M70.500 775l3 3M65.500 772h4"/><circle cx="82" cy="772" r="4"/><path d="M85 775l3 3M80 772h4M82 770v4"/>
<path d="M104 768v10M114 768l-7 5 7 5z" stroke="#5e5e5e"/><path d="M121 773l7-5v10z" stroke="#5e5e5e"/>
<path d="M129 768l9 5-9 5z" fill="#d0d0d0" stroke="none"/>
<path d="M144 768v10M148 768l7 5-7 5z" stroke="#bbb" fill="#bbb"/><path d="M159 768l6 5-6 5zM166 768v10" stroke="#bbb" fill="#bbb"/>
<path d="M179 773v-2h9M186 769l2 2-2 2M188 775v2h-9M181 775l-2 2 2 2" stroke="#d0d8e8"/>
<path d="M200 768h9v10h-9zM204 778h8" stroke="#aaa"/><path d="M215 769h9v9h-9z" stroke="#686868"/><path d="M230 768h9v9h-9zM231 780h3M236 780h3" stroke="#aaa"/><path d="M244 768h9v9h-9zM245 780h3M250 780h3" stroke="#aaa"/>
<rect x="265" y="769" width="9" height="9" stroke="#c4cde0"/><rect x="267" y="771" width="5" height="5" stroke="#c4cde0"/>
<path d="M288 769h6v7h-6zM291 773h5v5h-5z" stroke="#5e5e5e"/><path d="M304 768l-2 2h4zM304 779l-2-2h4zM304 770v7" stroke="#aaa"/><circle cx="318" cy="774" r="4" stroke="#666"/><path d="M328 769h8l1 9h-9zM336 770l2-2" stroke="#aaa"/><path d="M344 778l7-9" stroke="#666"/>
<path d="M7 788l3-3 3 3M7 793l3 3 3-3" stroke="#aaa"/>
<!-- track eyes -->
<path d="M7 811c3-4 8-4 11 0-3 4-8 4-11 0z" stroke="#4b4a90"/><circle cx="12" cy="811" r="2" fill="#393880" stroke="none"/>
<path d="M6 830c3-4 8-4 11 0-3 4-8 4-11 0z"/><circle cx="11.500" cy="830" r="2" fill="#ccc" stroke="none"/>
<path d="M6 906c3-4 8-4 11 0-3 4-8 4-11 0z"/><circle cx="11.500" cy="906" r="2" fill="#ccc" stroke="none"/>
<path d="M6 1003c3-4 8-4 11 0-3 4-8 4-11 0z"/><circle cx="11.500" cy="1003" r="2" fill="#ccc" stroke="none"/>
<!-- clip brackets -->
<path d="M36 801h3v5h-3zM36 821h3v5h-3zM36 896h3v5h-3zM36 994h3v5h-3z" stroke="#ccc" stroke-width=".8"/>
<path d="M1141 801h3v5h-3zM1141 821h3v5h-3zM1173 897h3v5h-3zM1173 994h3v5h-3z" stroke="#ccc" stroke-width=".8"/>
<path d="M21 1027l3 3-3 3" stroke="#777"/><path d="M24 1027l-3 3 3 3" stroke="#777"/><path d="M1353 1027l3 3-3 3M1361 811l3-3 3 3M1361 1016l3 3 3-3" stroke="#aaa"/>
<path d="M1361 52l3-2 3 2M1361 733l3 2 3-2M1353 742l3 3-3 3" stroke="#ccc"/>
<path d="M84 745h-5M101 745h-5M98.500 742v6" stroke="#aaa"/><rect x="110" y="743" width="4" height="4" fill="#ccc" stroke="none"/>
<path d="M197 748a4 4 0 0 1 6-4M213 748a4 4 0 0 1 6-4" stroke="#999"/><circle cx="227" cy="745" r="3.500" stroke="#888"/><path d="M239 742l-3 3 3 3" stroke="#777"/>
</svg>

<!-- labels: sub tool -->
<span class="lb" style="left:1680px;top:562px;width:37px">Hard</span>
<span class="lb" style="left:1790px;top:562px;width:40px">Soft</span>
<span class="lb" style="left:1650px;top:588px;width:67px">Kneaded eraser</span>
<span class="lb" style="left:1790px;top:588px;width:40px">Rough</span>
<span class="lb" style="left:1680px;top:614px;width:37px">Vector</span>
<div style="left:1776px;top:611px;width:55px;height:12px;background:#555"></div>
<span class="lb" style="left:1760px;top:614px;width:70px">Multiple layers</span>
<span class="lb" style="left:1650px;top:640px;width:67px">Snap eraser</span>
<div style="left:1761px;top:638px;width:70px;height:12px;background:#4e5a78"></div>
<span class="lb" style="left:1755px;top:640px;width:75px">Erase Along Edge</span>
<span class="t" style="left:1704px;top:668px;font-size:8.6px;color:#cfcfcf;letter-spacing:.2px">Add sub tool</span>

<!-- tool property rows -->
<span class="t" style="left:1608px;top:845px;font-size:8.6px;color:#e6e6e6;letter-spacing:.1px">Erase Along Edge</span>
<span class="t" style="left:1619px;top:874px;font-size:8.6px;color:#c8c8c8">Brush Size</span>
<div style="left:1633px;top:885px;width:145px;height:3px;background:#353535"></div>
<div style="left:1633px;top:883px;width:74px;height:5px;background:#606060"></div>
<span class="t" style="left:1794px;top:879px;font-size:9px;color:#d4d4d4;font-weight:bold">15.0</span>
<div style="left:1676px;top:893px;width:155px;height:15px;background:#555;border:1px solid #666;box-sizing:border-box"></div>
<span class="t" style="left:1619px;top:896px;font-size:8.4px;color:#c8c8c8">Blending mode</span>
<span class="t" style="left:1738px;top:896px;font-size:9px;color:#c8c8c8">Erase</span>
<span class="t" style="left:1619px;top:914px;font-size:8.6px;color:#c8c8c8">Anti-aliasing</span>
<div style="left:1757px;top:910px;width:74px;height:17px;background:#555"></div>
<div style="left:1789px;top:910px;width:16px;height:17px;background:#4f86e0"></div>
<div style="left:1760px;top:913px;width:10px;height:10px;background:#bbb;border-radius:50%"></div>
<div style="left:1776px;top:913px;width:10px;height:10px;background:#c5c5c5;border-radius:50%"></div>
<div style="left:1792px;top:913px;width:10px;height:10px;background:#e0dfa0;border-radius:50%"></div>
<div style="left:1807px;top:913px;width:11px;height:11px;background:radial-gradient(circle,#bbb 20%,#555 80%);border-radius:50%"></div>
<div style="left:1615px;top:927px;width:215px;height:1px;background:#575757"></div>
<div style="left:1619px;top:931px;width:10px;height:10px;background:#5a5a5a;border:1px solid #666;box-sizing:border-box"></div>
<span class="t" style="left:1632px;top:932px;font-size:8.8px;color:#c0c0c0">Erase on all layers</span>
<div style="left:1615px;top:944px;width:215px;height:1px;background:#575757"></div>
<div style="left:1619px;top:948px;width:10px;height:10px;background:#777;box-sizing:border-box"></div>
<span class="t" style="left:1632px;top:948px;font-size:8.8px;color:#c0c0c0">Do not cross lines of reference layer</span>
<div style="left:1615px;top:961px;width:215px;height:1px;background:#575757"></div>
<div style="left:1619px;top:965px;width:10px;height:10px;background:#777"></div>
<span class="t" style="left:1632px;top:965px;font-size:8.8px;color:#c0c0c0">Fill up to vector path</span>
<div style="left:1615px;top:977px;width:215px;height:1px;background:#575757"></div>
<span class="t" style="left:1619px;top:980px;font-size:8.6px;color:#c8c8c8">Tolerance</span>
<div style="left:1633px;top:993px;width:145px;height:3px;background:#353535"></div>
<div style="left:1633px;top:989px;width:15px;height:5px;background:#777"></div>
<span class="t" style="left:1794px;top:984px;font-size:9px;color:#d4d4d4;font-weight:bold">10.0</span>
<div style="left:1615px;top:996px;width:215px;height:1px;background:#575757"></div>
<div style="left:1619px;top:999px;width:10px;height:10px;background:#777"></div>
<span class="t" style="left:1632px;top:999px;font-size:8.6px;color:#c8c8c8">Area scaling</span>
<div style="left:1633px;top:1013px;width:145px;height:3px;background:#353535"></div>
<div style="left:1633px;top:1010px;width:80px;height:5px;background:#666"></div>
<span class="t" style="left:1805px;top:1004px;font-size:9px;color:#d4d4d4;font-weight:bold">2</span>
<div style="left:1607px;top:1019px;width:236px;height:18px;background:#4c4c4c"></div>
<div style="left:1607px;top:1034px;width:236px;height:3px;background:#2a2a2a"></div>
<svg style="left:1607px;top:940px" width="30" height="75" viewBox="0 0 30 75" fill="none" stroke="#eee" stroke-width="1.600"><path d="M14 13l2.500 3 5-6M14 30l2.500 3 5-6M14 64l2.500 3 5-6"/></svg>

<!-- overlay drawing -->
<svg style="left:460px;top:770px" width="620" height="267" viewBox="0 0 1568 801" preserveAspectRatio="none" stroke="#2a55e2" stroke-width="7" stroke-linecap="round" stroke-linejoin="round" fill="#fff">
<path stroke-width="9" d="M755 28C850 30 920 110 922 220 925 340 840 480 690 487 610 482 560 440 540 345L440 395 530 310C520 280 530 200 530 170 545 80 640 35 755 28Z"/>
<path stroke-width="9" d="M1040 378C1085 360 1140 375 1180 425 1230 395 1290 360 1350 380 1380 400 1400 420 1430 410 1470 430 1485 470 1470 550 1465 590 1420 615 1390 625 1340 625 1320 640 1270 655 1230 640 1180 650 1130 665 1080 685 1020 670 980 680 930 680 880 680 865 650 870 620 860 590 840 560 845 510 850 480 860 460 890 430 920 420 960 405 1000 400 1005 405 1020 385 1040 378Z"/>
<circle cx="710" cy="598" r="13" stroke-width="9"/><circle cx="773" cy="582" r="13" stroke-width="9"/>
<path d="M150 530C120 620 95 720 75 805L290 805 298 615C330 640 370 660 410 670L432 640 340 555 310 520Z"/>
<path d="M75 285C65 235 90 198 125 205 160 215 195 265 205 290L140 312C110 305 85 300 75 285Z"/>
<path d="M108 256C124 252 140 278 144 290L122 282Z" fill="#2a55e2" stroke="none"/>
<path d="M135 310L25 338 90 347 65 380 100 372 110 388Z" />
<ellipse cx="228" cy="410" rx="105" ry="122"/>
<path d="M333 375C362 370 370 415 345 450 340 470 330 480 320 485" />
<path d="M225 300C200 340 190 390 185 445L130 440M232 398L208 432M240 430L245 470M295 405C272 412 272 445 290 455M282 265L266 290M315 285L300 310M332 305L318 325" fill="none"/>
<path d="M378 672L375 720 415 695 412 805 655 805C640 720 620 650 590 615 622 605 625 590 590 575 550 570 510 590 480 600 450 600 420 625 410 640Z"/>
<path d="M415 665L495 638M450 680C460 700 475 700 485 680M525 668C532 675 548 665 550 640M490 710C505 735 515 730 525 712M485 515L522 522M462 540L500 548M490 555L500 560" fill="none"/>
</svg>
<span class="t" style="left:688px;top:820px;font-size:36px;letter-spacing:4.600px;color:#2a55e2;-webkit-text-stroke:.7px #2a55e2;transform:rotate(-4deg)">thank</span>
<span class="t" style="left:730px;top:864px;font-size:38px;letter-spacing:3.600px;color:#2a55e2;-webkit-text-stroke:.7px #2a55e2;transform:rotate(-4deg)">you</span>
<span class="t" style="left:806px;top:932px;font-size:33px;letter-spacing:3.400px;word-spacing:4px;color:#2a55e2;-webkit-text-stroke:.7px #2a55e2;transform:rotate(-3deg)">gimme food</span>
</div></body></html>
